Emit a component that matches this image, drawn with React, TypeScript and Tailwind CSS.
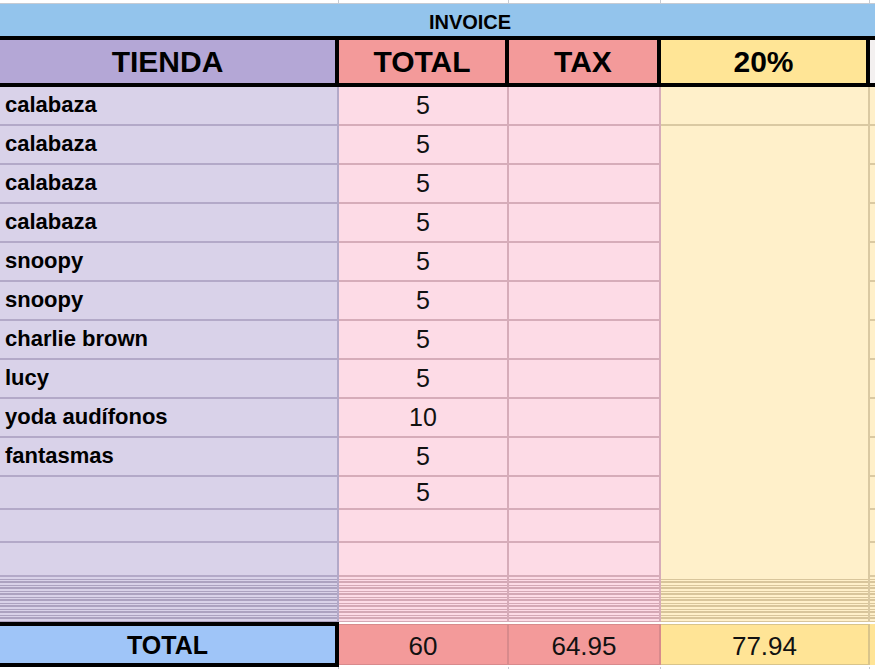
import React from 'react';

const cols = 'grid grid-cols-[339px_170px_152px_209px_5px]';

const rows: { name: string; total: string }[] = [
  { name: 'calabaza', total: '5' },
  { name: 'calabaza', total: '5' },
  { name: 'calabaza', total: '5' },
  { name: 'calabaza', total: '5' },
  { name: 'snoopy', total: '5' },
  { name: 'snoopy', total: '5' },
  { name: 'charlie brown', total: '5' },
  { name: 'lucy', total: '5' },
  { name: 'yoda audífonos', total: '10' },
  { name: 'fantasmas', total: '5' },
  { name: '', total: '5' },
  { name: '', total: '' },
  { name: '', total: '' },
];

// collapsed rows show up as a stack of thin lines
const Stripes: React.FC<{ className: string }> = ({ className }) => (
  <div className="flex flex-col">
    {Array.from({ length: 15 }).map((_, i) => (
      <div key={i} className={`h-[3px] ${i % 2 ? 'border-b-2' : 'border-b'} ${className}`} />
    ))}
  </div>
);

export default function App() {
  return (
    <div className="w-[875px] h-[669px] overflow-hidden bg-white text-black font-['Liberation_Sans',Arial,sans-serif]">
      {/* top strip */}
      <div className={`${cols} h-[4px] border-b border-[#c6cbd3]`}>
        <div className="border-r border-[#c6cbd3]" />
        <div className="border-r border-[#c6cbd3]" />
        <div className="border-r border-[#c6cbd3]" />
        <div className="border-r border-[#c6cbd3]" />
        <div />
      </div>

      {/* invoice band */}
      <div className="h-[32px] bg-[#93c4ec] overflow-hidden">
        <div className="w-[940px] h-full flex items-center justify-center pt-[3px] text-[20px] font-bold leading-none">
          INVOICE
        </div>
      </div>

      {/* headers */}
      <div className={`${cols} h-[51px] border-y-4 border-black`}>
        <div className="bg-[#b4a7d6] border-r-4 border-black flex items-center justify-center text-[30px] font-bold leading-none">TIENDA</div>
        <div className="bg-[#f39a9a] border-r-4 border-black flex items-center justify-center text-[30px] font-bold leading-none">TOTAL</div>
        <div className="bg-[#f39a9a] border-r-4 border-black flex items-center justify-center text-[30px] font-bold leading-none">TAX</div>
        <div className="bg-[#ffe596] border-r-4 border-black flex items-center justify-center text-[30px] font-bold leading-none">20%</div>
        <div className="bg-[#f3f0f0]" />
      </div>

      {/* data rows */}
      <div className={`${cols} grid-rows-[repeat(10,39px)_33px_33px_34px]`}>
        {rows.map((r, i) => (
          <React.Fragment key={i}>
            <div className="bg-[#d9d2e9] border-r-2 border-b-2 border-[#b3a9c8] flex items-center pl-[5px] pb-[1px] text-[22px] font-bold leading-none">
              {r.name}
            </div>
            <div className="bg-[#fddbe6] border-r-2 border-b-2 border-[#d6acb9] flex items-center justify-center text-[25px] leading-none text-[#111]">
              {r.total}
            </div>
            <div className="bg-[#fddbe6] border-r-2 border-b-2 border-[#d6acb9]" />
            {i === 0 && <div className="bg-[#fff0ca] border-r-2 border-b-2 border-[#dac9a2]" />}
            {i === 1 && <div className="row-span-12 bg-[#fff0ca] border-r-2 border-[#dac9a2]" />}
            <div className="bg-[#fff0ca] border-b-2 border-[#dac9a2]" />
          </React.Fragment>
        ))}
      </div>

      {/* hidden rows */}
      <div className={`${cols} h-[45px]`}>
        <div className="bg-[#d9d2e9] border-r-2 border-[#b3a9c8]"><Stripes className="border-[#aca2c0]" /></div>
        <div className="bg-[#fddbe6] border-r-2 border-[#d6acb9]"><Stripes className="border-[#d4a8b5]" /></div>
        <div className="bg-[#fddbe6] border-r-2 border-[#d6acb9]"><Stripes className="border-[#d4a8b5]" /></div>
        <div className="bg-[#fff0ca] border-r-2 border-[#dac9a2]"><Stripes className="border-[#d8c59b]" /></div>
        <div className="bg-[#fff0ca]"><Stripes className="border-[#d8c59b]" /></div>
      </div>

      {/* total row */}
      <div className={`${cols} h-[45px]`}>
        <div className="bg-[#9fc5f8] border-y-4 border-r-4 border-black flex items-center justify-center pt-[2px] text-[25px] font-bold leading-none">TOTAL</div>
        <div className="my-[2px] bg-[#f39a9a] border-r-2 border-y border-[#d88a8c] flex items-center justify-center pt-[2px] text-[26px] leading-none text-[#111]">60</div>
        <div className="my-[2px] bg-[#f39a9a] border-r-2 border-y border-[#d88a8c] flex items-center justify-center pt-[2px] text-[26px] leading-none text-[#111]">64.95</div>
        <div className="my-[2px] bg-[#ffe496] border-r-2 border-y border-[#d9c48a] flex items-center justify-center pt-[2px] text-[26px] leading-none text-[#111]">77.94</div>
        <div className="my-[2px] bg-[#ffe496]" />
      </div>

      {/* below */}
      <div className={`${cols} h-[2px]`}>
        <div className="border-r border-[#c6cbd3]" />
        <div className="border-r border-[#c6cbd3]" />
        <div className="border-r border-[#c6cbd3]" />
        <div className="border-r border-[#c6cbd3]" />
        <div />
      </div>
    </div>
  );
}
